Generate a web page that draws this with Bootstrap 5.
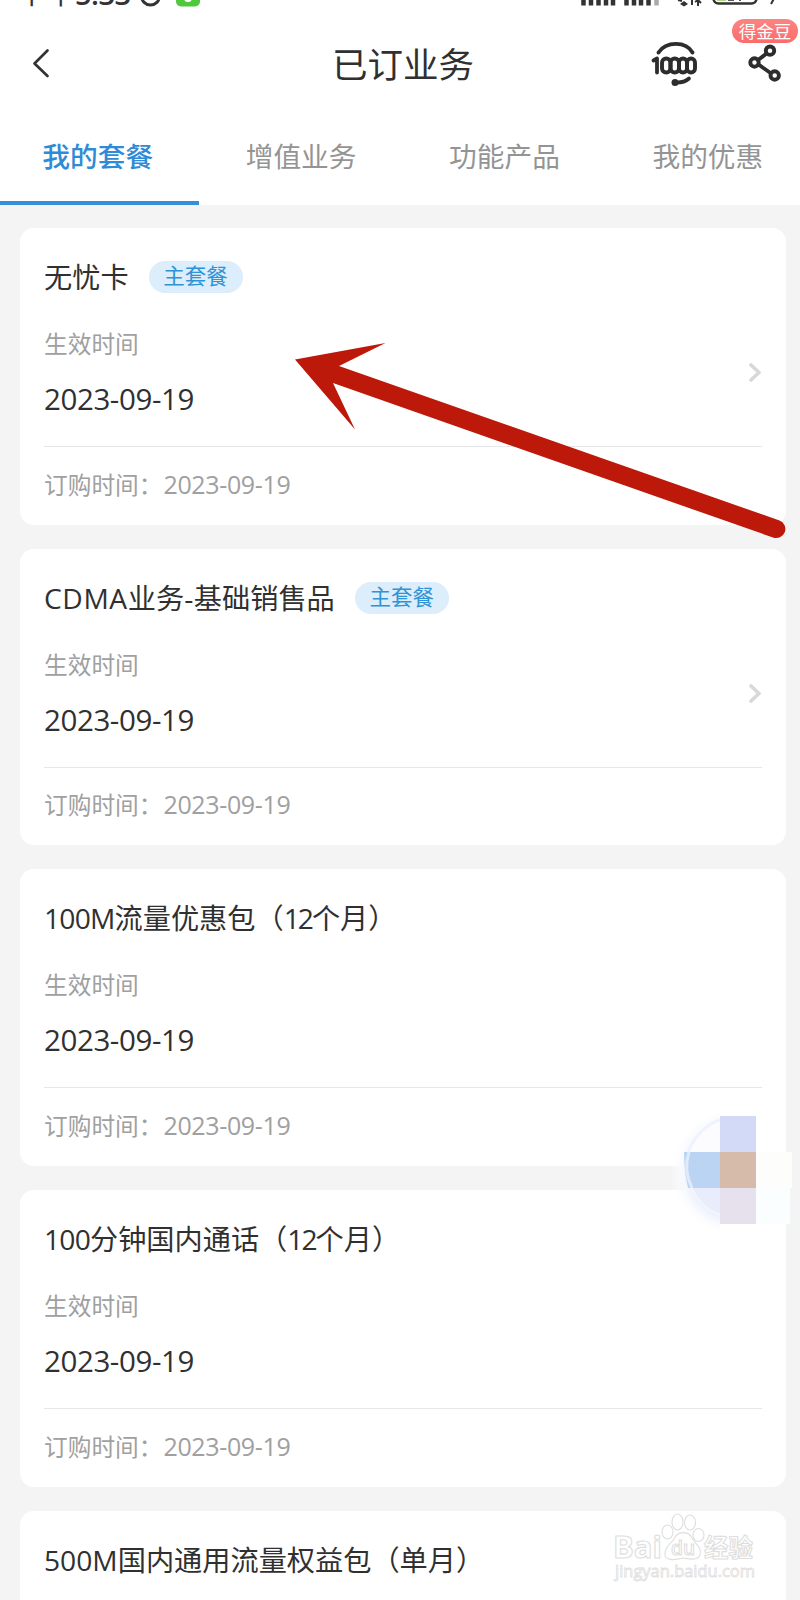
<!DOCTYPE html>
<html lang="zh-CN">
<head>
<meta charset="utf-8">
<meta name="viewport" content="width=device-width, initial-scale=1">
<title>已订业务</title>
<link href="https://cdn.jsdelivr.net/npm/bootstrap@5.3.0/dist/css/bootstrap.min.css" rel="stylesheet">
<style>
  body { font-family: "Open Sans", "Noto Sans CJK SC", sans-serif; background: #f4f4f4; color: #303030; }
  .screen { width: 800px; height: 1600px; }
  .status { height: 8px; }
  .titlebar { height: 110px; }
  .titlebar h1 { font-size: 35.5px; line-height: 40px; left: 332px; top: 36px; }
  .bean { left: 732px; top: 11px; width: 66px; height: 24px; font-size: 17.5px; line-height: 24px; background: linear-gradient(#fb8583, #fa6c6c); color: #fff; }
  .tabs { height: 87px; margin-left: -4px; font-size: 27.7px; font-weight: 400; }
  .tabs .nav-link { flex: 0 0 203.4px; padding: 16px 0 0; line-height: 44px; color: #949494; }
  .tabs .nav-link.active { color: #2f8bd6; border-bottom: 4px solid #3590d8; font-weight: 500; }
  .plans { padding: 23px 14px 0 20px; gap: 24px; }
  .plan { height: 296.7px; border: 0; border-radius: 14px; padding: 29px 24px 0; flex: none; }
  .plan h2 { font-size: 28.2px; line-height: 40px; }
  .narrow { letter-spacing: -.8px; }
  .narrower { letter-spacing: -2px; }
  .wide { letter-spacing: .6px; }
  .tag { width: 94px; height: 32px; margin-left: 20px; font-size: 21.5px; line-height: 30px; background: #dcedfb; color: #2f94d6; }
  .cap { font-size: 23.7px; line-height: 34px; margin-top: 30px; color: #a0a0a0; }
  .day { font-size: 29.5px; line-height: 40px; margin-top: 18px; letter-spacing: -.4px; }
  .foot { height: 78px; margin-top: 27px; border-top: 1px solid #e7e7e7; font-size: 23.7px; color: #a0a0a0; }
  .foot span { font-size: 25px; letter-spacing: -.35px; margin: -2px 0 0 1px; }
  .go { right: 25px; top: 134px; }
  .overlay { left: 0; top: 0; pointer-events: none; }
</style>
</head>
<body>
<main class="screen position-relative overflow-hidden d-flex flex-column">
  <header class="bg-white">
    <div class="status">
      <svg class="d-block" width="800" height="8" viewBox="0 0 800 8">
        <text x="18" y="4" font-size="28.5" fill="#333">下午</text>
        <text x="75" y="5" font-size="29" font-weight="600" fill="#333" textLength="56">5:33</text>
        <circle cx="150.500" cy="-4" r="9" fill="none" stroke="#333" stroke-width="3"/>
        <rect x="176" y="-18" width="24" height="24.500" rx="5" fill="#50c83c"/>
        <path d="M185 0q3 2 6 0" fill="none" stroke="#fff" stroke-width="2"/>
        <path d="M583.500-2V5.500M591-4V5.500M598.500-6V5.500M606-8V5.500M613-8V5.500M626.500-2V5.500M634-4V5.500M641-6V5.500M648.500-8V5.500" stroke="#333" stroke-width="4.500"/>
        <path d="M656.500-8V5.500" stroke="#aaa" stroke-width="4.500"/>
        <path d="M678 0l4 1M692-2v7M698-2v8M695 2l3-2 3 3" fill="none" stroke="#333" stroke-width="2"/><path d="M680 4l4-3 4 3-4 2.500z" fill="#333"/>
        <rect x="713.500" y="-15" width="43" height="18.500" rx="5" fill="#fff" stroke="#333" stroke-width="2.500"/>
        <rect x="717" y="-10" width="9" height="11" fill="#a7db83"/><path d="M728 0h6M740-2v3" stroke="#555" stroke-width="2"/>
        <path d="M776-5l-5 9" stroke="#333" stroke-width="2"/>
      </svg>
    </div>
    <div class="titlebar position-relative">
      <svg class="overlay position-absolute" width="800" height="100" viewBox="0 8 800 100" fill="none" stroke="#333" stroke-linecap="round" stroke-linejoin="round">
        <path d="M47.500 50.500L34.500 63.500L47.500 76" stroke-width="2.700"/>
        <g stroke="#2d2d2d">
          <path d="M658.500 52.500C666 41 686 41 692.500 52.500" stroke-width="3.900"/>
          <path d="M653.500 60.500l3.500-2V72.500" stroke-width="3.800"/>
          <g stroke-width="3.900"><rect x="662" y="58.500" width="8.500" height="14" rx="4.200"/><rect x="670.500" y="58.500" width="8.500" height="14" rx="4.200"/><rect x="679" y="58.500" width="8" height="14" rx="4"/><rect x="687" y="58.500" width="8" height="14" rx="4"/></g>
          <path d="M675 82.500Q684 83 689 78.500" stroke-width="3.700"/><circle cx="675" cy="82.500" r="3.500" fill="#2d2d2d" stroke="none"/>
          <path d="M758 60l8-6M758.500 64.500l12 8.500" stroke-width="3.800"/>
          <g stroke-width="3.900"><circle cx="770" cy="50.700" r="4.200"/><circle cx="754.500" cy="62.500" r="4.200"/><circle cx="774.700" cy="75.500" r="4.200"/></g>
        </g>
      </svg>
      <h1 class="position-absolute fw-normal m-0">已订业务</h1>
      <span class="bean position-absolute rounded-pill text-center">得金豆</span>
    </div>
    <nav class="tabs nav flex-nowrap text-center">
      <a class="nav-link active">我的套餐</a><a class="nav-link">增值业务</a><a class="nav-link">功能产品</a><a class="nav-link">我的优惠</a>
    </nav>
  </header>
  <section class="plans d-flex flex-column">
    <article class="plan card">
      <div class="d-flex align-items-center"><h2 class="fw-normal m-0">无忧卡</h2><span class="tag rounded-pill text-center">主套餐</span></div>
      <div class="cap">生效时间</div><div class="day">2023-09-19</div>
      <div class="foot d-flex align-items-center">订购时间：<span>2023-09-19</span></div>
      <svg class="go position-absolute" width="12" height="21" viewBox="0 0 12 21"><path d="M2 3l8 7.500L2 18" fill="none" stroke="#d8d8d8" stroke-width="3.600" stroke-linecap="round"/></svg>
    </article>
    <article class="plan card">
      <div class="d-flex align-items-center"><h2 class="fw-normal m-0"><span class="wide">CDMA</span>业务<span class="wide">-</span>基础销售品</h2><span class="tag rounded-pill text-center">主套餐</span></div>
      <div class="cap">生效时间</div><div class="day">2023-09-19</div>
      <div class="foot d-flex align-items-center">订购时间：<span>2023-09-19</span></div>
      <svg class="go position-absolute" width="12" height="21" viewBox="0 0 12 21"><path d="M2 3l8 7.500L2 18" fill="none" stroke="#d8d8d8" stroke-width="3.600" stroke-linecap="round"/></svg>
    </article>
    <article class="plan card">
      <h2 class="fw-normal m-0"><span class="narrow">100M</span>流量优惠包（<span class="narrower">12</span>个月）</h2>
      <div class="cap">生效时间</div><div class="day">2023-09-19</div>
      <div class="foot d-flex align-items-center">订购时间：<span>2023-09-19</span></div>
    </article>
    <article class="plan card">
      <h2 class="fw-normal m-0"><span class="narrow">100</span>分钟国内通话（<span class="narrower">12</span>个月）</h2>
      <div class="cap">生效时间</div><div class="day">2023-09-19</div>
      <div class="foot d-flex align-items-center">订购时间：<span>2023-09-19</span></div>
    </article>
    <article class="plan card">
      <h2 class="fw-normal m-0">500M国内通用流量权益包（单月）</h2>
    </article>
  </section>
  <!-- arrow, floating button and watermark lie over the list -->
  <svg class="overlay position-absolute" width="800" height="1600" viewBox="0 0 800 1600">
    <defs>
      <radialGradient id="halo"><stop offset=".68" stop-color="#e9effc"/><stop offset=".8" stop-color="#f6f8fe"/><stop offset="1" stop-color="#fff" stop-opacity="0"/></radialGradient>
      <clipPath id="left"><rect x="660" y="1100" width="60" height="150"/></clipPath>
      <clipPath id="disc"><circle cx="737" cy="1168" r="49"/></clipPath>
    </defs>
    <path d="M295 359.500L385.500 343L339 366L779.500 520.500A8.800 8.800 0 0 1 773 537.500L333 383L355 429.500Z" fill="#bc190a"/>
    <g clip-path="url(#left)">
      <circle cx="736" cy="1172" r="66" fill="url(#halo)"/>
      <circle cx="737" cy="1168" r="51" fill="#fcfcfe" stroke="#eef3fd" stroke-width="3"/>
      <rect x="684" y="1188" width="36" height="36" fill="#e9ecfb" clip-path="url(#disc)"/>
    </g>
    <path d="M684 1152h36v36h-32q-4-18-4-36z" fill="#bcd4f4"/>
    <path d="M689 1152q-6 18 3 36" fill="none" stroke="#e0eafb" stroke-width="3"/>
    <rect x="720" y="1116" width="36" height="36" fill="#d2daf7"/>
    <rect x="720" y="1152" width="36" height="36" fill="#d6baaa"/>
    <rect x="720" y="1188" width="36" height="36" fill="#e6e1ed"/>
    <rect x="756" y="1152" width="36" height="36" fill="#fdfdfb"/>
    <rect x="756" y="1188" width="34" height="36" fill="#fbfefe"/>
    <g fill="#fff" stroke="#dedede" stroke-width="1.100">
      <text x="613" y="1558" font-size="31" font-weight="700" textLength="49" lengthAdjust="spacingAndGlyphs">Bai</text>
      <ellipse cx="667.500" cy="1532" rx="5.500" ry="7"/><ellipse cx="677.500" cy="1522" rx="5.500" ry="8"/><ellipse cx="690" cy="1522.500" rx="5.500" ry="7.500"/><ellipse cx="698.500" cy="1535" rx="5.500" ry="6.500"/>
      <path d="M665 1556C664 1546 672 1544 675 1537C679 1531 689 1531 692 1538C696 1545 702 1547 700 1555C697 1561 690 1559 683 1558C675 1560 668 1561 665 1556Z"/>
      <text x="671" y="1555" font-size="20" font-weight="600" textLength="24" lengthAdjust="spacingAndGlyphs">du</text>
      <text x="704" y="1557" font-size="24.500" font-weight="700">经验</text>
      <text x="615" y="1577" font-size="17" stroke-width=".8" textLength="140" lengthAdjust="spacingAndGlyphs">jingyan.baidu.com</text>
    </g>
  </svg>
</main>
<script src="https://cdn.jsdelivr.net/npm/bootstrap@5.3.0/dist/js/bootstrap.bundle.min.js"></script>
</body>
</html>
